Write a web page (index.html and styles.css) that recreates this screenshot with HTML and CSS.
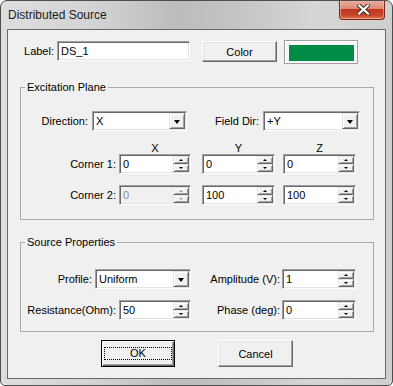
FILE: index.html
```html
<!DOCTYPE html>
<html lang="en">
<head>
    <meta charset="UTF-8">
    <meta name="viewport" content="width=device-width, initial-scale=1.0">
    <title>Distributed Source</title>
    <link rel="stylesheet" href="styles.css">
</head>
<body>
    <div class="window">
        <div class="titlebar">
            <span class="title">Distributed Source</span>
            <button class="close-btn" aria-label="Close">
                <svg width="13" height="11" viewBox="0 0 13 11">
                    <path d="M2 1.5 L11 9.5 M11 1.5 L2 9.5" stroke="#3a2a28" stroke-width="4" stroke-linecap="square"/>
                    <path d="M2 1.5 L11 9.5 M11 1.5 L2 9.5" stroke="#ffffff" stroke-width="2.2" stroke-linecap="square"/>
                </svg>
            </button>
        </div>

        <div class="client">
            <div class="row top-row">
                <span class="lbl lbl-label">Label:</span>
                <div class="edit label-edit"><span class="val">DS_1</span></div>
                <button class="btn color-btn">Color</button>
                <div class="swatch"><div class="swatch-fill"></div></div>
            </div>

            <fieldset class="group excitation">
                <legend>Excitation Plane</legend>
                <div class="row dir-row">
                    <span class="lbl lbl-dir">Direction:</span>
                    <div class="combo combo-dir"><span class="val">X</span><span class="drop"><i class="tri-down"></i></span></div>
                    <span class="lbl lbl-field">Field Dir:</span>
                    <div class="combo combo-field"><span class="val">+Y</span><span class="drop"><i class="tri-down"></i></span></div>
                </div>
                <div class="row axis-row">
                    <span class="lbl lbl-corner"></span>
                    <span class="axis axis-x">X</span>
                    <span class="axis axis-y">Y</span>
                    <span class="axis axis-z">Z</span>
                </div>
                <div class="row corner-row">
                    <span class="lbl lbl-corner">Corner 1:</span>
                    <div class="edit spin spin-x"><span class="val">0</span><span class="spin-btns"><span class="sb"><i class="tri-up"></i></span><span class="sb"><i class="tri-dn"></i></span></span></div>
                    <div class="edit spin spin-y"><span class="val">0</span><span class="spin-btns"><span class="sb"><i class="tri-up"></i></span><span class="sb"><i class="tri-dn"></i></span></span></div>
                    <div class="edit spin spin-z"><span class="val">0</span><span class="spin-btns"><span class="sb"><i class="tri-up"></i></span><span class="sb"><i class="tri-dn"></i></span></span></div>
                </div>
                <div class="row corner-row second">
                    <span class="lbl lbl-corner">Corner 2:</span>
                    <div class="edit spin spin-x disabled"><span class="val">0</span><span class="spin-btns"><span class="sb"><i class="tri-up"></i></span><span class="sb"><i class="tri-dn"></i></span></span></div>
                    <div class="edit spin spin-y"><span class="val">100</span><span class="spin-btns"><span class="sb"><i class="tri-up"></i></span><span class="sb"><i class="tri-dn"></i></span></span></div>
                    <div class="edit spin spin-z"><span class="val">100</span><span class="spin-btns"><span class="sb"><i class="tri-up"></i></span><span class="sb"><i class="tri-dn"></i></span></span></div>
                </div>
            </fieldset>

            <fieldset class="group source">
                <legend>Source Properties</legend>
                <div class="row profile-row">
                    <span class="lbl lbl-profile">Profile:</span>
                    <div class="combo combo-profile"><span class="val">Uniform</span><span class="drop"><i class="tri-down"></i></span></div>
                    <span class="lbl lbl-right">Amplitude (V):</span>
                    <div class="edit spin spin-r"><span class="val">1</span><span class="spin-btns"><span class="sb"><i class="tri-up"></i></span><span class="sb"><i class="tri-dn"></i></span></span></div>
                </div>
                <div class="row res-row">
                    <span class="lbl lbl-corner">Resistance(Ohm):</span>
                    <div class="edit spin spin-x"><span class="val">50</span><span class="spin-btns"><span class="sb"><i class="tri-up"></i></span><span class="sb"><i class="tri-dn"></i></span></span></div>
                    <span class="lbl lbl-right">Phase (deg):</span>
                    <div class="edit spin spin-r"><span class="val">0</span><span class="spin-btns"><span class="sb"><i class="tri-up"></i></span><span class="sb"><i class="tri-dn"></i></span></span></div>
                </div>
            </fieldset>

            <div class="buttons">
                <button class="btn ok-btn"><span class="focus">OK</span></button>
                <button class="btn cancel-btn">Cancel</button>
            </div>
        </div>
    </div>
</body>
</html>
```

FILE: styles.css
```css
body {
    margin: 0;
    background-color: #ffffff;
    font-family: 'Liberation Sans', Arial, sans-serif;
    font-size: 11px;
    color: #000;
}

.window {
    width: 393px;
    height: 386px;
    box-sizing: border-box;
    border: 1px solid #4e4e4e;
    border-radius: 7px 7px 5px 5px;
    background: linear-gradient(to right, #dedede 0%, #d2d2d2 25%, #bcbcbc 45%, #c4c4c4 60%, #d6d6d6 80%, #cfcfcf 100%);
    overflow: hidden;
}

.titlebar {
    height: 28px;
    display: flex;
    align-items: flex-start;
    padding-left: 7px;
}

.title {
    font-size: 12px;
    line-height: 14px;
    margin-top: 7px;
    color: #1b1b1b;
}

.close-btn {
    margin: -1px 7px 0 auto;
    width: 46px;
    height: 20px;
    padding: 0;
    border: 1px solid #7a2617;
    border-top: none;
    border-radius: 0 0 4px 4px;
    background: linear-gradient(to bottom, #eab0a2 0%, #dc8a78 45%, #c2371d 50%, #c8462a 80%, #e07c52 100%);
    display: flex;
    align-items: center;
    justify-content: center;
    box-shadow: inset 0 0 0 1px rgba(255, 220, 210, 0.45);
}

.close-btn svg {
    display: block;
    margin-left: 2px;
}

.client {
    margin: 0 6px;
    width: 379px;
    height: 350px;
    box-sizing: border-box;
    border: 1px solid #6a6a6a;
    background-color: #f0f0f0;
    padding-top: 10px;
}

.row {
    display: flex;
    align-items: center;
    height: 20px;
}

.lbl {
    flex: none;
    text-align: right;
    white-space: nowrap;
}

/* 3D borders */
.edit,
.combo {
    box-sizing: border-box;
    height: 20px;
    border: 1px solid;
    border-color: #a0a0a0 #ffffff #ffffff #a0a0a0;
    box-shadow: inset 1px 1px 0 #696969, inset -1px -1px 0 #e3e3e3;
    background-color: #fff;
    padding: 1px;
    display: flex;
    align-items: center;
    flex: none;
}

.val {
    flex: 1;
    padding-left: 2px;
    line-height: 16px;
    white-space: nowrap;
    overflow: hidden;
}

.btn {
    box-sizing: border-box;
    font-family: inherit;
    font-size: 11px;
    color: #000;
    background-color: #f0f0f0;
    border: 1px solid;
    border-color: #ffffff #696969 #696969 #ffffff;
    box-shadow: inset -1px -1px 0 #a0a0a0, inset 1px 1px 0 #e3e3e3;
    padding: 0;
}

/* top row */
.top-row {
    height: 24px;
    align-items: flex-start;
}

.lbl-label {
    width: 46px;
    margin-right: 3px;
    line-height: 22px;
}

.label-edit {
    width: 133px;
    margin-top: 1px;
}

.color-btn {
    width: 75px;
    height: 21px;
    margin: 1px 0 0 12px;
}

.swatch {
    box-sizing: border-box;
    width: 74px;
    height: 24px;
    margin-left: 7px;
    border: 1px solid #a0a0a0;
    box-shadow: inset 0 0 0 1px #ffffff;
    background-color: #f6f6f6;
    padding: 4px 3px 2px 4px;
}

.swatch-fill {
    height: 16px;
    background-color: #008b47;
}

/* group boxes */
.group {
    box-sizing: border-box;
    width: 354px;
    margin: 16px 0 0 12px;
    padding: 0 0 14px 0;
    border: 1px solid #a9a9a9;
    min-width: 0;
}

.group legend {
    margin-left: 4px;
    padding: 0 2px;
    line-height: 14px;
    font-size: 11px;
}

.dir-row {
    margin-top: 17px;
}

.lbl-dir {
    width: 67px;
    margin-right: 4px;
}

.combo-dir {
    width: 95px;
}

.lbl-field {
    width: 72px;
    margin-right: 4px;
}

.combo-field {
    width: 97px;
}

.drop {
    box-sizing: border-box;
    width: 16px;
    height: 16px;
    flex: none;
    background-color: #f0f0f0;
    border: 1px solid;
    border-color: #e3e3e3 #696969 #696969 #e3e3e3;
    box-shadow: inset 1px 1px 0 #ffffff, inset -1px -1px 0 #a0a0a0;
    display: flex;
    align-items: center;
    justify-content: center;
}

.tri-down {
    width: 0;
    height: 0;
    border-left: 3.5px solid transparent;
    border-right: 3.5px solid transparent;
    border-top: 4px solid #000;
    margin-top: 1px;
}

.axis-row {
    margin-top: 11px;
    height: 12px;
    line-height: 12px;
}

.axis {
    flex: none;
    text-align: center;
}

.axis-x {
    width: 72px;
}

.axis-y {
    width: 73px;
    margin-left: 11px;
}

.axis-z {
    width: 73px;
    margin-left: 8px;
}

.lbl-corner {
    width: 95px;
    margin-right: 3px;
}

.corner-row.second {
    margin-top: 11px;
}

.spin-x {
    width: 72px;
}

.spin-y {
    width: 73px;
    margin-left: 11px;
}

.spin-z {
    width: 73px;
    margin-left: 8px;
}

.spin-btns {
    flex: none;
    width: 16px;
    height: 16px;
    display: flex;
    flex-direction: column;
}

.sb {
    box-sizing: border-box;
    height: 8px;
    background-color: #f0f0f0;
    border: 1px solid;
    border-color: #e3e3e3 #696969 #696969 #e3e3e3;
    box-shadow: inset 1px 1px 0 #ffffff, inset -1px -1px 0 #a0a0a0;
    display: flex;
    align-items: center;
    justify-content: center;
}

.tri-up {
    width: 0;
    height: 0;
    border-left: 2px solid transparent;
    border-right: 2px solid transparent;
    border-bottom: 2px solid #000;
}

.tri-dn {
    width: 0;
    height: 0;
    border-left: 2px solid transparent;
    border-right: 2px solid transparent;
    border-top: 2px solid #000;
}

.disabled {
    background-color: #f0f0f0;
}

.disabled .val {
    color: #8c8c8c;
}

.disabled .tri-up {
    border-bottom-color: #a0a0a0;
}

.disabled .tri-dn {
    border-top-color: #a0a0a0;
}

/* source properties */
.source {
    margin-top: 15px;
    padding-bottom: 11px;
}

.profile-row {
    margin-top: 20px;
}

.lbl-profile {
    width: 71px;
    margin-right: 3px;
}

.combo-profile {
    width: 96px;
}

.lbl-right {
    width: 89px;
    margin-right: 2px;
}

.spin-r {
    width: 74px;
}

.res-row {
    margin-top: 11px;
}

.res-row .lbl-right {
    width: 89px;
}

/* dialog buttons */
.buttons {
    display: flex;
    margin-top: 8px;
    padding-left: 93px;
}

.ok-btn {
    width: 74px;
    height: 27px;
    border: 1px solid #000;
    box-shadow: inset 1px 1px 0 #ffffff, inset -1px -1px 0 #696969, inset -2px -2px 0 #a0a0a0;
    display: flex;
    align-items: center;
    justify-content: center;
}

.focus {
    box-sizing: border-box;
    width: 68px;
    height: 13px;
    line-height: 11px;
    border: 1px dotted #000;
}

.cancel-btn {
    width: 75px;
    height: 27px;
    margin-left: 43px;
}
```
